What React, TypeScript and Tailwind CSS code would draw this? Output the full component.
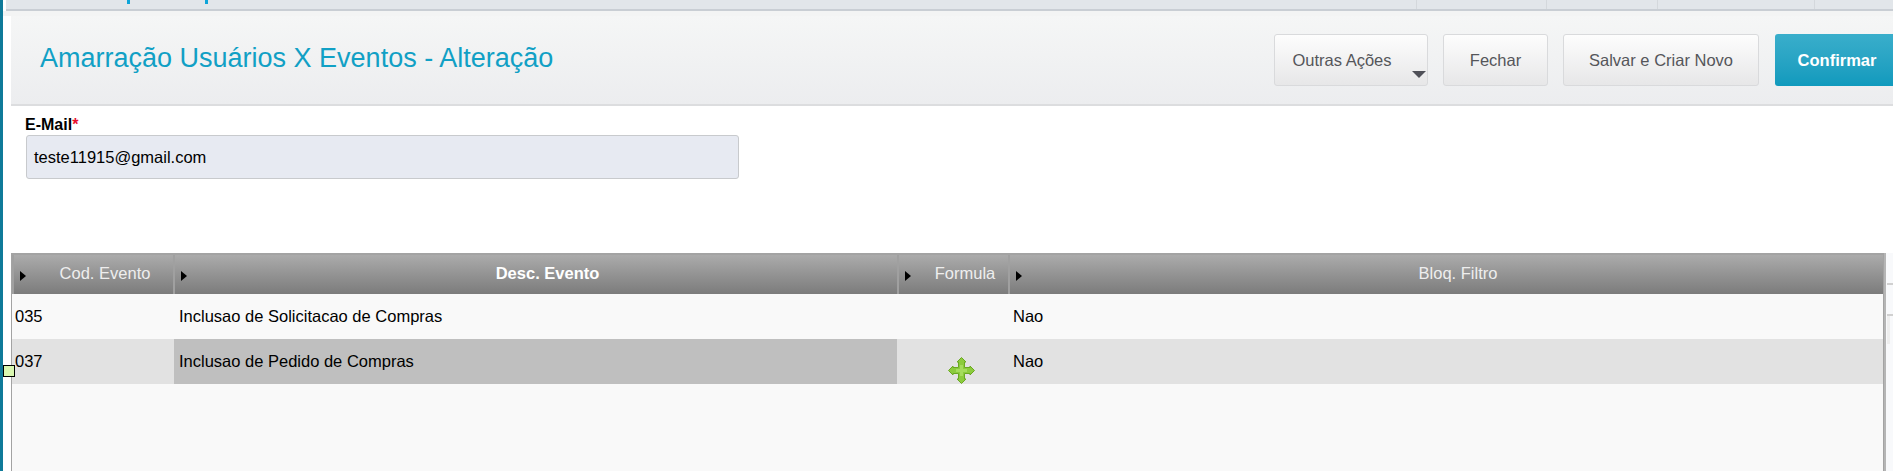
const COLUMNS = [
  { label: 'Cod. Evento', width: 'w-[161px]', bold: false },
  { label: 'Desc. Evento', width: 'w-[724px]', bold: true },
  { label: 'Formula', width: 'w-[111px]', bold: false },
  { label: 'Bloq. Filtro', width: 'flex-1', bold: false },
]

function MoveHandle() {
  return (
    <svg width="27" height="27" viewBox="0 0 27 27" className="absolute left-[51px] top-[18px]">
      <path
        d="M13.5 .5 L18 5 L16.5 5 L16.5 10.5 L22 10.5 L22 9 L26.5 13.5 L22 18 L22 16.5 L16.5 16.5 L16.5 22 L18 22 L13.5 26.5 L9 22 L10.5 22 L10.5 16.5 L5 16.5 L5 18 L.5 13.5 L5 9 L5 10.5 L10.5 10.5 L10.5 5 L9 5 Z"
        fill="#8ccb3d"
        stroke="#6aa821"
        strokeWidth="1"
      />
      <path d="M12 8 H15 V12 H19 V15 H15 V19 H12 V15 H8 V12 H12 Z" fill="#a5dc5c" />
    </svg>
  )
}

function Button({ children, className = '' }: { children: React.ReactNode; className?: string }) {
  return (
    <button className={`relative h-[52px] rounded-[3px] border border-[#d9dadc] bg-gradient-to-b from-[#fdfdfd] to-[#e7e7e8] text-[16.5px] text-[#55565a] ${className}`}>
      {children}
    </button>
  )
}

export default function App() {
  return (
    <div className="h-[471px] w-[1893px] overflow-hidden bg-white font-['Liberation_Sans',Arial,sans-serif]">
      <div className="flex h-full">
        <div className="w-[3px] bg-[#0f7a99]" />
        <div className="flex min-w-0 flex-1 flex-col">
          {/* what is left of the menu above */}
          <div className="relative ml-[3px] flex h-[11px] border-b-2 border-[#c9ced4] bg-[#e2e6ea]">
            <span className="absolute left-[121px] top-0 h-[4px] w-[3px] bg-[#0ea5d9]" />
            <span className="absolute left-[199px] top-0 h-[4px] w-[3px] bg-[#0ea5d9]" />
            <div className="w-[1411px] border-r border-[#d4d8dc]" />
            <div className="w-[130px] border-r border-[#d4d8dc]" />
            <div className="w-[111px] border-r border-[#d4d8dc]" />
            <div className="w-[157px] border-r border-[#d4d8dc]" />
          </div>
          <div className="h-[5px] bg-[#f3f4f4]" />

          <div className="ml-[8px] flex h-[90px] items-start justify-between border-b-2 border-[#dcdddf] bg-gradient-to-b from-[#f5f6f6] to-[#ecedef]">
            <h1 className="ml-[29px] mt-[24px] text-[27px] leading-[36px] font-normal text-[#11a0c5]">
              Amarração Usuários X Eventos - Alteração
            </h1>
            <div className="mt-[18px] flex gap-[15px]">
              <Button className="w-[154px] pr-[18px]">
                Outras Ações
                <span className="absolute bottom-[7px] right-[1px] h-0 w-0 border-x-[7px] border-t-[7px] border-x-transparent border-t-[#4f5058]" />
              </Button>
              <Button className="w-[105px]">Fechar</Button>
              <Button className="w-[196px]">Salvar e Criar Novo</Button>
              <button className="ml-[1px] h-[52px] w-[118px] rounded-l-[3px] bg-gradient-to-b from-[#39aecb] to-[#0f9abd] pl-[6px] text-[16.5px] font-bold text-white">
                Confirmar
              </button>
            </div>
          </div>

          <div className="ml-[22px] mt-[8px] flex h-[21px] items-center text-[16px] leading-none font-bold text-black">
            E-Mail<span className="text-[#e8112d]">*</span>
          </div>
          <div className="ml-[23px] flex h-[44px] w-[713px] items-center rounded-[3px] border border-[#c8cacd] bg-[#e7eaf2] pl-[7px] text-[16.5px] text-black">
            teste11915@gmail.com
          </div>

          <div className="mt-[74px] flex min-h-0 flex-1">
            <div className="relative ml-[8px] flex w-[1873px] flex-col border-x border-t-2 border-[#a3a3a3] bg-[#f9f9f9]">
              <div className="flex h-[39px]">
                {COLUMNS.map(col => (
                  <div
                    key={col.label}
                    className={`relative flex items-center justify-center border-l-2 border-[#a0a0a0] bg-gradient-to-b from-[#ababab] to-[#7c7c7c] pb-[2px] pl-[23px] text-[16.5px] ${col.width} ${col.bold ? 'font-bold text-white' : 'text-[#eeeeee]'}`}
                  >
                    <span className="absolute left-[6px] top-[16px] h-0 w-0 border-y-[5.5px] border-l-[6px] border-y-transparent border-l-black" />
                    {col.label}
                  </div>
                ))}
              </div>
              <div className="flex h-[45px] items-center text-[16.5px] text-black">
                <div className="w-[162px] pl-[3px]">035</div>
                <div className="w-[723px] pl-[5px]">Inclusao de Solicitacao de Compras</div>
                <div className="w-[111px]" />
                <div className="flex-1 pl-[5px]">Nao</div>
              </div>
              <div className="relative flex h-[45px] items-center bg-[#e2e2e2] text-[16.5px] text-black">
                <span className="absolute left-[-9px] top-[26px] h-[12px] w-[12px] border border-black bg-[#d9f7b0]" />
                <div className="w-[162px] pl-[3px]">037</div>
                <div className="flex h-full w-[723px] items-center bg-[#bfbfbf] pl-[5px]">Inclusao de Pedido de Compras</div>
                <div className="relative h-full w-[111px]">
                  <MoveHandle />
                </div>
                <div className="flex-1 pl-[5px]">Nao</div>
              </div>
            </div>
            <div className="flex flex-1 flex-col border-l-2 border-[#b5b5b5] bg-[#f8f9fb] pl-px">
              <div className="h-[32px] border-b-2 border-[#d0d0d0]" />
              <div className="h-[31px] border-b-2 border-[#d0d0d0]" />
              <div className="h-[28px] w-[3px] bg-[#eeeeee]" />
            </div>
          </div>
        </div>
      </div>
    </div>
  )
}
